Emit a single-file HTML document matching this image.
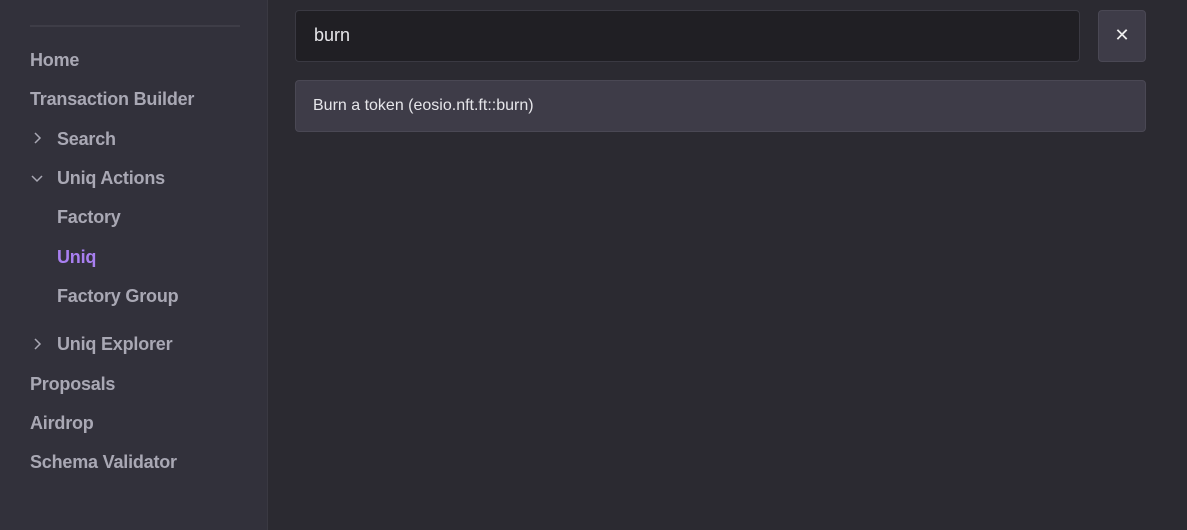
<!DOCTYPE html><html><head><style>
body{margin:0;width:1187px;height:530px;background:#2b2a31;font-family:"Liberation Sans",sans-serif;position:relative;overflow:hidden}
.sb{position:absolute;left:0;top:0;width:267px;height:530px;background:#32313b;border-right:1px solid #3a3942}
.hr{position:absolute;left:30px;top:25px;width:210px;height:2px;background:#3e3d47}
.n{position:absolute;font-size:18px;font-weight:bold;color:#a9a8b4;line-height:20px;letter-spacing:-0.2px}
.c{position:absolute;left:31px;width:12px;height:12px}
.in{position:absolute;left:295px;top:10px;width:785px;height:52px;background:#201f24;border:1px solid #3a3942;border-radius:4px;box-sizing:border-box}
.in span{position:absolute;left:18px;top:14px;font-size:18px;color:#e6e6ea}
.x{position:absolute;left:1098px;top:10px;width:48px;height:52px;background:#3e3c48;border:1px solid #4a4854;border-radius:4px;box-sizing:border-box;color:#eee;font-size:18px;text-align:center;line-height:49px}
.it{position:absolute;left:295px;top:80px;width:851px;height:52px;background:#3e3c48;border:1px solid #4a4854;border-radius:4px;box-sizing:border-box}
.it span{position:absolute;left:17px;top:16px;font-size:16px;color:#e6e6ea}
</style></head><body>
<div class="sb"><div class="hr"></div>
<div class="n" style="left:30px;top:50px">Home</div>
<div class="n" style="left:30px;top:89px">Transaction Builder</div>
<svg class="c" style="top:132px" viewBox="0 0 12 12"><path d="M4 1l5 5-5 5" stroke="#a9a8b4" stroke-width="1.5" fill="none"/></svg>
<div class="n" style="left:57px;top:129px">Search</div>
<svg class="c" style="top:172px" viewBox="0 0 12 12"><path d="M1 4l5 5 5-5" stroke="#a9a8b4" stroke-width="1.5" fill="none"/></svg>
<div class="n" style="left:57px;top:168px">Uniq Actions</div>
<div class="n" style="left:57px;top:207px">Factory</div>
<div class="n" style="left:57px;top:247px;color:#a87ff0">Uniq</div>
<div class="n" style="left:57px;top:286px">Factory Group</div>
<svg class="c" style="top:338px" viewBox="0 0 12 12"><path d="M4 1l5 5-5 5" stroke="#a9a8b4" stroke-width="1.5" fill="none"/></svg>
<div class="n" style="left:57px;top:334px">Uniq Explorer</div>
<div class="n" style="left:30px;top:374px">Proposals</div>
<div class="n" style="left:30px;top:413px">Airdrop</div>
<div class="n" style="left:30px;top:452px">Schema Validator</div>
</div>
<div class="in"><span>burn</span></div>
<div class="x">✕</div>
<div class="it"><span>Burn a token (eosio.nft.ft::burn)</span></div>
</body></html>
